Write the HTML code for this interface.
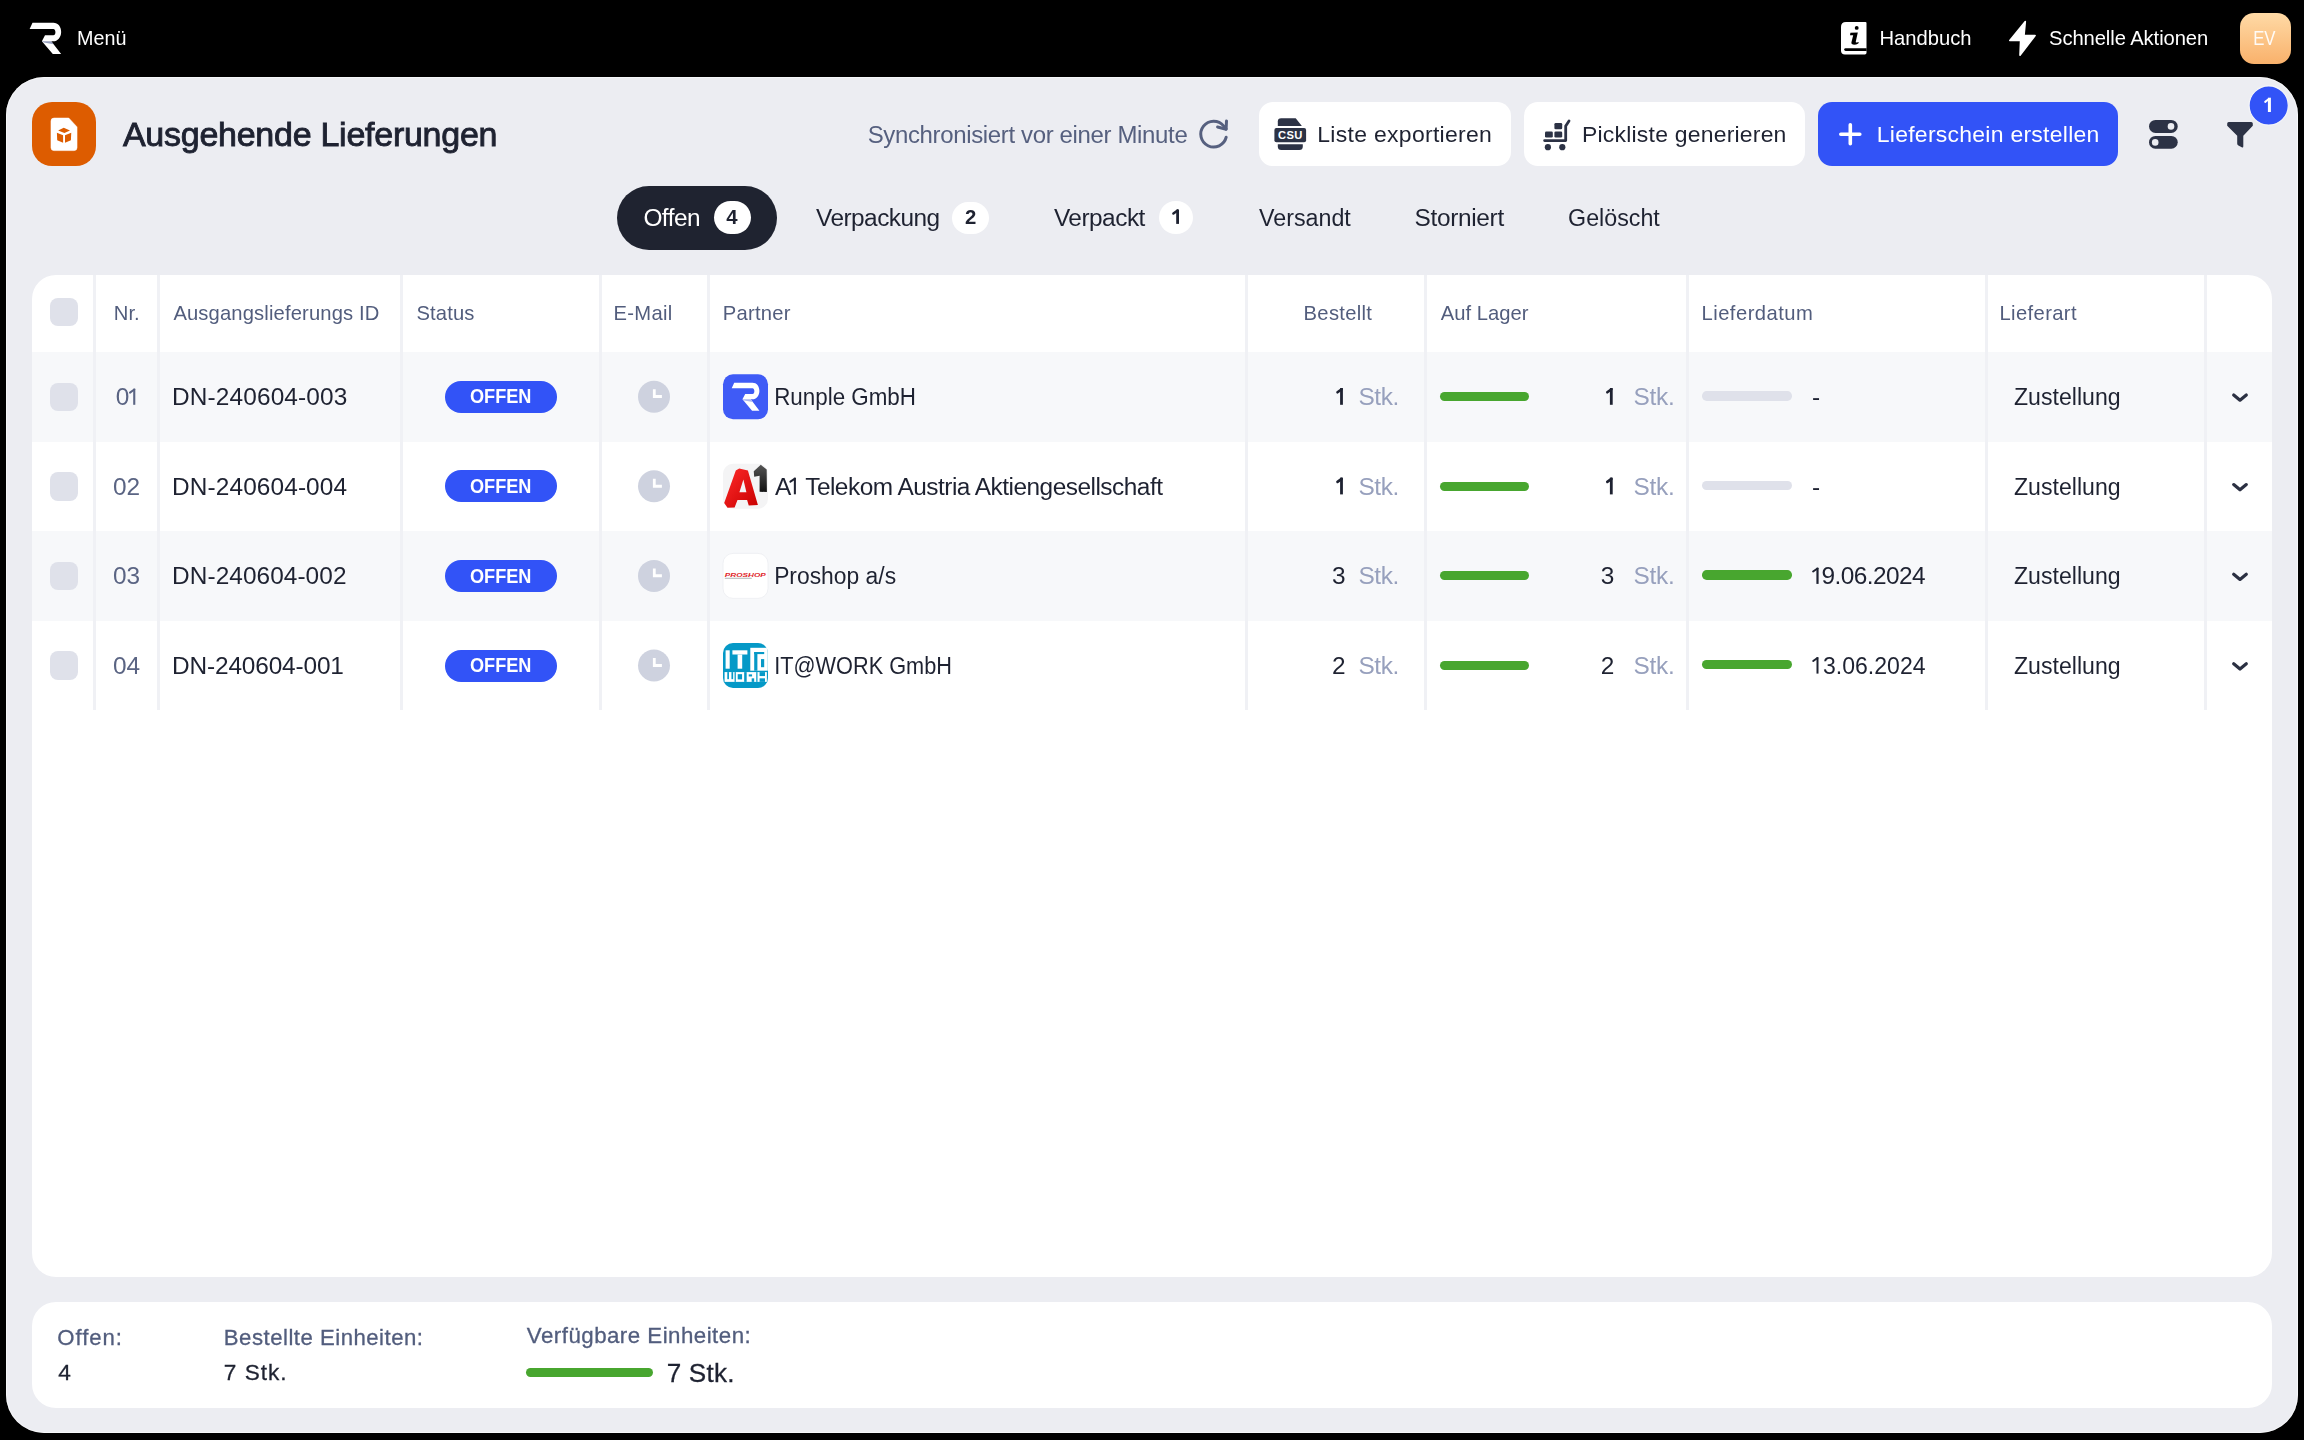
<!DOCTYPE html>
<html><head><meta charset="utf-8"><title>Ausgehende Lieferungen</title>
<style>
html,body{margin:0;padding:0;width:2304px;height:1440px;overflow:hidden;background:#000;}
body{position:relative;font-family:"Liberation Sans",sans-serif;}
.b{position:absolute;box-sizing:border-box;}
.t{position:absolute;line-height:1;white-space:nowrap;}
.tl{position:absolute;left:0;top:0;width:2304px;height:1440px;will-change:transform;}
svg{position:absolute;left:0;top:0;}
</style></head><body>
<div class="b" style="left:6px;top:77px;width:2291.5px;height:1356.3px;background:#ECEDF2;border-radius:38px;box-shadow:inset 0 0 0 1px rgba(255,255,255,0.55)"></div>
<div class="b" style="left:2240px;top:12.9px;width:51px;height:50.800000000000004px;background:linear-gradient(180deg,#FFDAA6,#F9B16B);border-radius:14px;"></div>
<div class="b" style="left:32px;top:102px;width:64px;height:64px;background:#DD5C00;border-radius:20px;"></div>
<div class="b" style="left:1259px;top:102.2px;width:252px;height:64.10000000000001px;background:#FFFFFF;border-radius:14px;"></div>
<div class="b" style="left:1524px;top:102.2px;width:281.20000000000005px;height:64.10000000000001px;background:#FFFFFF;border-radius:14px;"></div>
<div class="b" style="left:1818.3px;top:102.2px;width:300.0000000000002px;height:63.999999999999986px;background:#3253F7;border-radius:14px;"></div>
<div class="b" style="left:617.4px;top:185.5px;width:159.39999999999998px;height:64.0px;background:#1F2330;border-radius:32px;"></div>
<div class="b" style="left:713.5px;top:201px;width:37.5px;height:33px;background:#FFFFFF;border-radius:16.5px;"></div>
<div class="b" style="left:951.8px;top:201.5px;width:37.40000000000009px;height:32.5px;background:#FFFFFF;border-radius:16.5px;"></div>
<div class="b" style="left:1159.4px;top:201px;width:33.899999999999864px;height:33px;background:#FFFFFF;border-radius:16.5px;"></div>
<div class="b" style="left:32px;top:275px;width:2240px;height:1002px;background:#FFFFFF;border-radius:24px;overflow:hidden"></div>
<div class="b" style="left:32px;top:352.0px;width:2240px;height:89.60000000000002px;background:#F7F8FA;border-radius:0px;"></div>
<div class="b" style="left:32px;top:531.2px;width:2240px;height:89.59999999999991px;background:#F7F8FA;border-radius:0px;"></div>
<div class="b" style="left:93px;top:275px;width:3px;height:435px;background:#F0F1F5;border-radius:0px;"></div>
<div class="b" style="left:157px;top:275px;width:3px;height:435px;background:#F0F1F5;border-radius:0px;"></div>
<div class="b" style="left:400px;top:275px;width:3px;height:435px;background:#F0F1F5;border-radius:0px;"></div>
<div class="b" style="left:599px;top:275px;width:3px;height:435px;background:#F0F1F5;border-radius:0px;"></div>
<div class="b" style="left:707px;top:275px;width:3px;height:435px;background:#F0F1F5;border-radius:0px;"></div>
<div class="b" style="left:1245px;top:275px;width:3px;height:435px;background:#F0F1F5;border-radius:0px;"></div>
<div class="b" style="left:1424px;top:275px;width:3px;height:435px;background:#F0F1F5;border-radius:0px;"></div>
<div class="b" style="left:1686px;top:275px;width:3px;height:435px;background:#F0F1F5;border-radius:0px;"></div>
<div class="b" style="left:1985px;top:275px;width:3px;height:435px;background:#F0F1F5;border-radius:0px;"></div>
<div class="b" style="left:2204px;top:275px;width:3px;height:435px;background:#F0F1F5;border-radius:0px;"></div>
<div class="b" style="left:32px;top:1302px;width:2240px;height:106px;background:#FFFFFF;border-radius:24px;"></div>
<div class="b" style="left:50px;top:297.6px;width:28px;height:28.399999999999977px;background:#DFE1EA;border-radius:8px;"></div>
<div class="b" style="left:50px;top:382.6px;width:28px;height:28.5px;background:#DFE1EA;border-radius:8px;"></div>
<div class="b" style="left:444.7px;top:380.7px;width:112.30000000000001px;height:32.19999999999999px;background:#3253F7;border-radius:16.1px;"></div>
<div class="b" style="left:1440.3px;top:391.9px;width:89.10000000000014px;height:9.399999999999977px;background:#48A62F;border-radius:4.7px;"></div>
<div class="b" style="left:1702.2px;top:391.2px;width:89.79999999999995px;height:9.399999999999977px;background:#DFE1EA;border-radius:4.7px;"></div>
<div class="b" style="left:50px;top:472.20000000000005px;width:28px;height:28.5px;background:#DFE1EA;border-radius:8px;"></div>
<div class="b" style="left:444.7px;top:470.29999999999995px;width:112.30000000000001px;height:32.19999999999999px;background:#3253F7;border-radius:16.1px;"></div>
<div class="b" style="left:1440.3px;top:481.5px;width:89.10000000000014px;height:9.399999999999977px;background:#48A62F;border-radius:4.7px;"></div>
<div class="b" style="left:1702.2px;top:480.8px;width:89.79999999999995px;height:9.399999999999977px;background:#DFE1EA;border-radius:4.7px;"></div>
<div class="b" style="left:50px;top:561.8px;width:28px;height:28.5px;background:#DFE1EA;border-radius:8px;"></div>
<div class="b" style="left:444.7px;top:559.9px;width:112.30000000000001px;height:32.200000000000045px;background:#3253F7;border-radius:16.1px;"></div>
<div class="b" style="left:1440.3px;top:571.0999999999999px;width:89.10000000000014px;height:9.399999999999977px;background:#48A62F;border-radius:4.7px;"></div>
<div class="b" style="left:1702.2px;top:570.3999999999999px;width:89.79999999999995px;height:9.399999999999977px;background:#48A62F;border-radius:4.7px;"></div>
<div class="b" style="left:50px;top:651.4px;width:28px;height:28.5px;background:#DFE1EA;border-radius:8px;"></div>
<div class="b" style="left:444.7px;top:649.5px;width:112.30000000000001px;height:32.200000000000045px;background:#3253F7;border-radius:16.1px;"></div>
<div class="b" style="left:1440.3px;top:660.6999999999999px;width:89.10000000000014px;height:9.399999999999977px;background:#48A62F;border-radius:4.7px;"></div>
<div class="b" style="left:1702.2px;top:659.9999999999999px;width:89.79999999999995px;height:9.399999999999977px;background:#48A62F;border-radius:4.7px;"></div>
<div class="b" style="left:525.8px;top:1368.1px;width:127.60000000000002px;height:9.300000000000182px;background:#48A62F;border-radius:4.7px;"></div>
<svg width="2304" height="1440" viewBox="0 0 2304 1440">
<path d="M29.64,29.01 L32.5,22.76 L53.33,22.76 C58.02,22.76 61.15,26.67 61.15,31.88 C61.15,37.08 57.5,41.25 53.33,41.25 L51.25,41.25 L61.15,54.01 L52.81,54.01 L41.88,41.25 L45,35.26 L53.33,35.26 C54.64,35.26 55.42,33.7 55.42,32.14 C55.42,30.57 54.64,29.01 53.33,29.01 Z" fill="#fff"/>
<path d="M41.88,41.25 L51.25,41.25 L53.6,44.3 L44,42.6 Z" fill="#8a93b5" opacity="0.9"/>
<path d="M1846,22 L1865.5,22 Q1866.5,22 1866.5,23 L1866.5,52.7 Q1866.5,54.4 1864.8,54.4 L1845,54.4 Q1841,54.4 1841,50.4 L1841,27 Q1841,22 1846,22 Z" fill="#fff"/>
<path d="M1845.6,48.2 L1866.6,48.2 L1866.6,51 L1845.6,51 Q1844.2,51 1844.2,49.6 Q1844.2,48.2 1845.6,48.2 Z" fill="#000"/>
<circle cx="1856.7" cy="27.9" r="1.95" fill="#000"/>
<path d="M1850.4,32.7 L1857.8,32.5 L1855.8,41.5 Q1855.5,42.8 1856.8,42.5 L1858.8,42.0 L1858.3,43.4 Q1855.9,44.8 1853.3,44.6 Q1850.9,44.3 1851.5,42.0 L1853.2,35.3 L1850.0,35.2 Z" fill="#000"/>
<path d="M2025.3,21.6 L2009.8,40.5 L2020.6,40.5 L2020.0,55.2 L2035.1,35.6 L2024.0,35.6 Z" fill="#fff" stroke="#fff" stroke-width="1.6" stroke-linejoin="round"/>
<path d="M54,118.1 L68.75,118.1 L77,126.9 L77,147.6 Q77,150.6 74,150.6 L54,150.6 Q51,150.6 51,147.6 L51,121.1 Q51,118.1 54,118.1 Z" fill="#fff" stroke="#fff" stroke-width="0.6" stroke-linejoin="round"/>
<path d="M58.1,130.6 L63.75,127.8 L70,130.6 L64.4,133.1 Z M56.9,132.8 L63.1,135.3 L63.1,142.8 L57.2,140.3 Z M65,135.3 L71.25,132.8 L70.9,140.3 L65,142.8 Z" fill="#DD5C00"/>
<path d="M1226.2,137.2 A12.9,12.9 0 1 1 1223.6,125.9 L1226.1,129" fill="none" stroke="#56607F" stroke-width="3" stroke-linecap="round" stroke-linejoin="round"/>
<polyline points="1226.5,121 1226.1,129.3 1217.6,127" fill="none" stroke="#56607F" stroke-width="3" stroke-linecap="round" stroke-linejoin="round"/>
<path d="M1277.8,126.1 L1277.8,121.6 Q1277.8,118.3 1281.1,118.3 L1295.7,118.3 L1301.9,126.1 Z" fill="#2C3245"/>
<rect x="1274.4" y="128" width="31.7" height="14.2" rx="2" fill="#2C3245"/>
<path d="M1277.8,144.2 L1302.8,144.2 L1302.8,146.5 Q1302.8,150 1299.3,150 L1281.3,150 Q1277.8,150 1277.8,146.5 Z" fill="#2C3245"/>
<text x="1290.4" y="139" font-family="Liberation Sans" font-weight="700" font-size="11.2" fill="#fff" text-anchor="middle" letter-spacing="0.4">CSU</text>
<g fill="#2C3245"><rect x="1554.4" y="123" width="7.8" height="6.2" rx="1.3"/><rect x="1554.4" y="131.4" width="7.8" height="6.1" rx="1.3"/><rect x="1545" y="131.4" width="7.8" height="6.1" rx="1.3"/><circle cx="1547.9" cy="147.2" r="3.1"/><circle cx="1562.3" cy="147.2" r="3.1"/></g>
<polyline points="1544.6,140.6 1565.7,140.6 1565.7,126 1569,121" fill="none" stroke="#2C3245" stroke-width="2.8" stroke-linecap="round" stroke-linejoin="round"/>
<path d="M1850.3,124.8 L1850.3,143.7 M1840.8,134.25 L1859.8,134.25" stroke="#fff" stroke-width="3.6" stroke-linecap="round"/>
<rect x="2149" y="119.9" width="28.7" height="13" rx="6.5" fill="#2C3245"/><rect x="2149" y="136" width="28.7" height="12.7" rx="6.35" fill="#2C3245"/>
<circle cx="2171" cy="126.4" r="3.3" fill="#ECEDF2"/><circle cx="2155.2" cy="142.4" r="3.3" fill="#ECEDF2"/>
<path d="M2228.7,122 L2251.2,122 Q2252.8,122 2252.8,123.6 L2252.8,125.8 L2243.3,135.7 L2243.3,146.2 Q2243.3,147.9 2241.7,147.2 L2238.4,145.5 Q2237.2,144.9 2237.2,143.6 L2237.2,135.7 L2227.2,125.8 L2227.2,123.6 Q2227.2,122 2228.7,122 Z" fill="#2C3245"/>
<circle cx="2268.7" cy="105.5" r="19.6" fill="#3253F7" stroke="#F4F5F9" stroke-width="1.2"/>
<circle cx="654" cy="396.7" r="16" fill="#CED2DF"/>
<path d="M652.9,389.2 h2.8 v5.9 h6.2 v3 h-9 Z" fill="#fff"/>
<polyline points="2233.7,395.0 2240,400.2 2246.3,395.0" fill="none" stroke="#2B3042" stroke-width="3.2" stroke-linecap="round" stroke-linejoin="round"/>
<circle cx="654" cy="486.3" r="16" fill="#CED2DF"/>
<path d="M652.9,478.8 h2.8 v5.9 h6.2 v3 h-9 Z" fill="#fff"/>
<polyline points="2233.7,484.6 2240,489.8 2246.3,484.6" fill="none" stroke="#2B3042" stroke-width="3.2" stroke-linecap="round" stroke-linejoin="round"/>
<circle cx="654" cy="575.9" r="16" fill="#CED2DF"/>
<path d="M652.9,568.4 h2.8 v5.9 h6.2 v3 h-9 Z" fill="#fff"/>
<polyline points="2233.7,574.2 2240,579.4 2246.3,574.2" fill="none" stroke="#2B3042" stroke-width="3.2" stroke-linecap="round" stroke-linejoin="round"/>
<circle cx="654" cy="665.5" r="16" fill="#CED2DF"/>
<path d="M652.9,658.0 h2.8 v5.9 h6.2 v3 h-9 Z" fill="#fff"/>
<polyline points="2233.7,663.8 2240,669.0 2246.3,663.8" fill="none" stroke="#2B3042" stroke-width="3.2" stroke-linecap="round" stroke-linejoin="round"/>
<rect x="723" y="374.2" width="45" height="45" rx="10" fill="#3F5BF6" />
<g transform="translate(731.7,382.7) scale(0.8791,0.8992) translate(-29.64,-22.76)"><path d="M29.64,29.01 L32.5,22.76 L53.33,22.76 C58.02,22.76 61.15,26.67 61.15,31.88 C61.15,37.08 57.5,41.25 53.33,41.25 L51.25,41.25 L61.15,54.01 L52.81,54.01 L41.88,41.25 L45,35.26 L53.33,35.26 C54.64,35.26 55.42,33.7 55.42,32.14 C55.42,30.57 54.64,29.01 53.33,29.01 Z" fill="#fff"/><path d="M41.88,41.25 L51.25,41.25 L53.6,44.3 L44,42.6 Z" fill="#aab4f0"/></g>
<rect x="723" y="463.8" width="45" height="45" rx="10" fill="#F4F4F5" />
<defs><linearGradient id="ra" x1="0" y1="0" x2="1" y2="1"><stop offset="0" stop-color="#FF2A2A"/><stop offset="1" stop-color="#C80000"/></linearGradient><linearGradient id="ka" x1="0" y1="0" x2="0" y2="1"><stop offset="0" stop-color="#555"/><stop offset="1" stop-color="#111"/></linearGradient></defs>
<path d="M724.2,502.9 L727.5,507.7 L734.6,507.5 L737.5,500 L747.1,500 L748.75,505.6 L757.9,505 L747.9,470.4 L739.2,468.5 L735.8,470.4 Z M739.4,492.3 L743.4,479.4 L746.4,492.3 Z" fill="url(#ra)" fill-rule="evenodd"/>
<path d="M753.75,471.25 L760.8,464.8 L766.7,469.6 L766.9,492.1 L759.6,491.7 L759.6,475.8 L754.2,476.7 Z" fill="url(#ka)"/>
<rect x="723" y="553.4" width="45" height="45" rx="10" fill="#FFFFFF" stroke="#ECEDF1" stroke-width="0.8"/>
<text x="724.8" y="577" font-family="Liberation Sans" font-weight="700" font-style="italic" font-size="5.3" fill="#E0252A" textLength="41" lengthAdjust="spacingAndGlyphs">PROSHOP</text>
<rect x="724.8" y="577.7" width="27" height="1.3" fill="#9aa0a0" opacity="0.6"/>
<rect x="723" y="643.0" width="45" height="45" rx="10" fill="#0599C7" />
<g clip-path="url(#itc)"><rect x="725.60" y="650.30" width="4.10" height="18.40" fill="#fff"/><rect x="732.40" y="650.30" width="15.00" height="4.20" fill="#fff"/><rect x="737.60" y="654.50" width="4.60" height="14.20" fill="#fff"/><rect x="750.30" y="647.80" width="17.50" height="22.90" fill="#fff"/><rect x="754.20" y="652.00" width="10.00" height="2.10" fill="#0599C7"/><rect x="754.20" y="652.00" width="3.20" height="18.70" fill="#0599C7"/><rect x="761.00" y="659.10" width="3.20" height="8.10" fill="#0599C7"/><rect x="724.58" y="672.09" width="42.29" height="9.79" fill="#fff"/><rect x="727.29" y="672.09" width="1.67" height="7.08" fill="#0599C7"/><rect x="731.46" y="672.09" width="1.67" height="7.08" fill="#0599C7"/><rect x="734.58" y="672.09" width="1.25" height="9.79" fill="#0599C7"/><rect x="737.71" y="674.17" width="4.37" height="5.21" fill="#0599C7"/><rect x="744.17" y="672.09" width="2.50" height="9.79" fill="#0599C7"/><rect x="748.75" y="674.38" width="3.33" height="2.08" fill="#0599C7"/><rect x="751.67" y="678.34" width="2.50" height="3.54" fill="#0599C7"/><rect x="756.25" y="672.09" width="1.25" height="9.79" fill="#0599C7"/><rect x="759.58" y="672.09" width="5.42" height="3.96" fill="#0599C7"/><rect x="759.58" y="678.34" width="5.42" height="3.54" fill="#0599C7"/></g>
<clipPath id="itc"><rect x="723" y="642.8" width="45" height="45" rx="10"/></clipPath>
</svg>
<div class="tl">
<div class="t" style="left:77.00px;top:28.15px;font-size:20.49px;letter-spacing:0.000px;color:#FFFFFF;font-weight:400;transform:scaleX(0.9627);transform-origin:1.00px 0;">Menü</div>
<div class="t" style="left:1879.50px;top:28.19px;font-size:20.20px;letter-spacing:-0.003px;color:#FFFFFF;font-weight:400;">Handbuch</div>
<div class="t" style="left:2049.00px;top:28.09px;font-size:20.20px;letter-spacing:-0.080px;color:#FFFFFF;font-weight:400;">Schnelle Aktionen</div>
<div class="t" style="left:2253.00px;top:28.09px;font-size:20.20px;letter-spacing:0.000px;color:rgba(255,255,255,0.92);font-weight:400;transform:scaleX(0.8310);transform-origin:1.00px 0;">EV</div>
<div class="t" style="left:122.95px;top:116.55px;font-size:34.01px;letter-spacing:-0.261px;color:#1E2231;font-weight:400;-webkit-text-stroke:0.9px #1E2231;">Ausgehende Lieferungen</div>
<div class="t" style="left:867.70px;top:122.59px;font-size:23.98px;letter-spacing:-0.345px;color:#56607F;font-weight:400;">Synchronisiert vor einer Minute</div>
<div class="t" style="left:1317.30px;top:123.36px;font-size:22.97px;letter-spacing:0.298px;color:#1E2231;font-weight:400;">Liste exportieren</div>
<div class="t" style="left:1582.00px;top:123.36px;font-size:22.97px;letter-spacing:0.208px;color:#1E2231;font-weight:400;">Pickliste generieren</div>
<div class="t" style="left:1876.80px;top:123.36px;font-size:22.97px;letter-spacing:0.260px;color:#FFFFFF;font-weight:400;">Lieferschein erstellen</div>
<div class="t" style="left:643.40px;top:205.62px;font-size:24.42px;letter-spacing:-0.523px;color:#FFFFFF;font-weight:400;">Offen</div>
<div class="t" style="left:726.20px;top:207.12px;font-size:20.35px;letter-spacing:0.000px;color:#1E2231;font-weight:700;">4</div>
<div class="t" style="left:816.00px;top:205.52px;font-size:24.42px;letter-spacing:-0.528px;color:#1E2231;font-weight:400;">Verpackung</div>
<div class="t" style="left:965.00px;top:207.12px;font-size:20.35px;letter-spacing:0.000px;color:#1E2231;font-weight:700;">2</div>
<div class="t" style="left:1053.90px;top:205.52px;font-size:24.42px;letter-spacing:-0.498px;color:#1E2231;font-weight:400;">Verpackt</div>
<div class="t" style="left:1258.60px;top:205.52px;font-size:24.42px;letter-spacing:0.000px;color:#1E2231;font-weight:400;transform:scaleX(0.9527);transform-origin:0.00px 0;">Versandt</div>
<div class="t" style="left:1414.60px;top:205.52px;font-size:24.42px;letter-spacing:-0.334px;color:#1E2231;font-weight:400;">Storniert</div>
<div class="t" style="left:1568.00px;top:205.52px;font-size:24.42px;letter-spacing:0.000px;color:#1E2231;font-weight:400;transform:scaleX(0.9524);transform-origin:1.00px 0;">Gelöscht</div>
<div class="t" style="left:113.80px;top:303.39px;font-size:20.20px;letter-spacing:0.006px;color:#525D7D;font-weight:400;">Nr.</div>
<div class="t" style="left:173.40px;top:303.39px;font-size:20.20px;letter-spacing:0.143px;color:#525D7D;font-weight:400;">Ausgangslieferungs ID</div>
<div class="t" style="left:416.40px;top:303.39px;font-size:20.20px;letter-spacing:0.152px;color:#525D7D;font-weight:400;">Status</div>
<div class="t" style="left:613.50px;top:303.39px;font-size:20.20px;letter-spacing:0.296px;color:#525D7D;font-weight:400;">E-Mail</div>
<div class="t" style="left:722.80px;top:303.39px;font-size:20.20px;letter-spacing:0.253px;color:#525D7D;font-weight:400;">Partner</div>
<div class="t" style="left:1303.60px;top:303.39px;font-size:20.20px;letter-spacing:0.301px;color:#525D7D;font-weight:400;">Bestellt</div>
<div class="t" style="left:1440.80px;top:303.39px;font-size:20.20px;letter-spacing:0.022px;color:#525D7D;font-weight:400;">Auf Lager</div>
<div class="t" style="left:1701.50px;top:303.39px;font-size:20.20px;letter-spacing:0.471px;color:#525D7D;font-weight:400;">Lieferdatum</div>
<div class="t" style="left:1999.40px;top:303.39px;font-size:20.20px;letter-spacing:0.393px;color:#525D7D;font-weight:400;">Lieferart</div>
<div class="t" style="left:115.70px;top:384.92px;font-size:24.42px;letter-spacing:0.000px;color:#5A6483;font-weight:400;">0</div>
<div class="t" style="left:172.10px;top:384.92px;font-size:24.42px;letter-spacing:0.125px;color:#1E2231;font-weight:400;">DN-240604-003</div>
<div class="t" style="left:470.40px;top:386.30px;font-size:20.78px;letter-spacing:0.000px;color:#FFFFFF;font-weight:700;transform:scaleX(0.8735);transform-origin:0.00px 0;">OFFEN</div>
<div class="t" style="left:774.10px;top:384.92px;font-size:24.42px;letter-spacing:0.000px;color:#1E2231;font-weight:400;transform:scaleX(0.9171);transform-origin:2.00px 0;">Runple GmbH</div>
<div class="t" style="left:1358.50px;top:384.92px;font-size:24.42px;letter-spacing:-0.455px;color:#97A0BD;font-weight:400;">Stk.</div>
<div class="t" style="left:1633.60px;top:384.92px;font-size:24.42px;letter-spacing:-0.322px;color:#97A0BD;font-weight:400;">Stk.</div>
<div class="t" style="left:1812.00px;top:384.92px;font-size:24.42px;letter-spacing:0.000px;color:#1E2231;font-weight:400;">-</div>
<div class="t" style="left:2013.90px;top:384.92px;font-size:24.42px;letter-spacing:0.000px;color:#1E2231;font-weight:400;transform:scaleX(0.9465);transform-origin:0.00px 0;">Zustellung</div>
<div class="t" style="left:112.91px;top:474.52px;font-size:24.42px;letter-spacing:0.000px;color:#5A6483;font-weight:400;">02</div>
<div class="t" style="left:172.10px;top:474.52px;font-size:24.42px;letter-spacing:0.108px;color:#1E2231;font-weight:400;">DN-240604-004</div>
<div class="t" style="left:470.40px;top:475.90px;font-size:20.78px;letter-spacing:0.000px;color:#FFFFFF;font-weight:700;transform:scaleX(0.8735);transform-origin:0.00px 0;">OFFEN</div>
<div class="t" style="left:775.00px;top:474.52px;font-size:24.42px;letter-spacing:0.000px;color:#1E2231;font-weight:400;">A</div>
<div class="t" style="left:805.20px;top:474.52px;font-size:24.42px;letter-spacing:-0.505px;color:#1E2231;font-weight:400;">Telekom Austria Aktiengesellschaft</div>
<div class="t" style="left:1358.50px;top:474.52px;font-size:24.42px;letter-spacing:-0.455px;color:#97A0BD;font-weight:400;">Stk.</div>
<div class="t" style="left:1633.60px;top:474.52px;font-size:24.42px;letter-spacing:-0.322px;color:#97A0BD;font-weight:400;">Stk.</div>
<div class="t" style="left:1812.00px;top:474.52px;font-size:24.42px;letter-spacing:0.000px;color:#1E2231;font-weight:400;">-</div>
<div class="t" style="left:2013.90px;top:474.52px;font-size:24.42px;letter-spacing:0.000px;color:#1E2231;font-weight:400;transform:scaleX(0.9465);transform-origin:0.00px 0;">Zustellung</div>
<div class="t" style="left:112.91px;top:564.12px;font-size:24.42px;letter-spacing:0.000px;color:#5A6483;font-weight:400;">03</div>
<div class="t" style="left:172.10px;top:564.12px;font-size:24.42px;letter-spacing:0.058px;color:#1E2231;font-weight:400;">DN-240604-002</div>
<div class="t" style="left:470.40px;top:565.50px;font-size:20.78px;letter-spacing:0.000px;color:#FFFFFF;font-weight:700;transform:scaleX(0.8735);transform-origin:0.00px 0;">OFFEN</div>
<div class="t" style="left:774.10px;top:564.12px;font-size:24.42px;letter-spacing:0.000px;color:#1E2231;font-weight:400;transform:scaleX(0.9364);transform-origin:2.00px 0;">Proshop a/s</div>
<div class="t" style="left:1332.00px;top:564.12px;font-size:24.42px;letter-spacing:0.000px;color:#1E2231;font-weight:400;">3</div>
<div class="t" style="left:1358.50px;top:564.12px;font-size:24.42px;letter-spacing:-0.455px;color:#97A0BD;font-weight:400;">Stk.</div>
<div class="t" style="left:1600.80px;top:564.12px;font-size:24.42px;letter-spacing:0.000px;color:#1E2231;font-weight:400;">3</div>
<div class="t" style="left:1633.60px;top:564.12px;font-size:24.42px;letter-spacing:-0.322px;color:#97A0BD;font-weight:400;">Stk.</div>
<div class="t" style="left:1821.50px;top:564.12px;font-size:24.42px;letter-spacing:-0.563px;color:#1E2231;font-weight:400;">9.06.2024</div>
<div class="t" style="left:2013.90px;top:564.12px;font-size:24.42px;letter-spacing:0.000px;color:#1E2231;font-weight:400;transform:scaleX(0.9465);transform-origin:0.00px 0;">Zustellung</div>
<div class="t" style="left:112.91px;top:653.72px;font-size:24.42px;letter-spacing:0.000px;color:#5A6483;font-weight:400;">04</div>
<div class="t" style="left:172.10px;top:653.72px;font-size:24.42px;letter-spacing:-0.158px;color:#1E2231;font-weight:400;">DN-240604-001</div>
<div class="t" style="left:470.40px;top:655.10px;font-size:20.78px;letter-spacing:0.000px;color:#FFFFFF;font-weight:700;transform:scaleX(0.8735);transform-origin:0.00px 0;">OFFEN</div>
<div class="t" style="left:774.10px;top:653.72px;font-size:24.42px;letter-spacing:0.000px;color:#1E2231;font-weight:400;transform:scaleX(0.8900);transform-origin:2.00px 0;">IT@WORK GmbH</div>
<div class="t" style="left:1332.00px;top:653.72px;font-size:24.42px;letter-spacing:0.000px;color:#1E2231;font-weight:400;">2</div>
<div class="t" style="left:1358.50px;top:653.72px;font-size:24.42px;letter-spacing:-0.455px;color:#97A0BD;font-weight:400;">Stk.</div>
<div class="t" style="left:1600.80px;top:653.72px;font-size:24.42px;letter-spacing:0.000px;color:#1E2231;font-weight:400;">2</div>
<div class="t" style="left:1633.60px;top:653.72px;font-size:24.42px;letter-spacing:-0.322px;color:#97A0BD;font-weight:400;">Stk.</div>
<div class="t" style="left:1823.00px;top:653.72px;font-size:24.42px;letter-spacing:0.000px;color:#1E2231;font-weight:400;transform:scaleX(0.9444);transform-origin:0.00px 0;">3.06.2024</div>
<div class="t" style="left:2013.90px;top:653.72px;font-size:24.42px;letter-spacing:0.000px;color:#1E2231;font-weight:400;transform:scaleX(0.9465);transform-origin:0.00px 0;">Zustellung</div>
<div class="t" style="left:57.35px;top:1327.08px;font-size:22.17px;letter-spacing:0.901px;color:#525D7D;font-weight:400;-webkit-text-stroke:0.3px #525D7D;">Offen:</div>
<div class="t" style="left:58.35px;top:1362.01px;font-size:22.60px;letter-spacing:0.000px;color:#1E2231;font-weight:400;-webkit-text-stroke:0.3px #1E2231;">4</div>
<div class="t" style="left:223.85px;top:1327.08px;font-size:22.17px;letter-spacing:0.498px;color:#525D7D;font-weight:400;-webkit-text-stroke:0.3px #525D7D;">Bestellte Einheiten:</div>
<div class="t" style="left:223.85px;top:1362.01px;font-size:22.60px;letter-spacing:1.002px;color:#1E2231;font-weight:400;-webkit-text-stroke:0.3px #1E2231;">7 Stk.</div>
<div class="t" style="left:526.85px;top:1324.96px;font-size:22.31px;letter-spacing:0.471px;color:#525D7D;font-weight:400;-webkit-text-stroke:0.3px #525D7D;">Verfügbare Einheiten:</div>
<div class="t" style="left:666.65px;top:1360.46px;font-size:26.09px;letter-spacing:0.212px;color:#1E2231;font-weight:400;-webkit-text-stroke:0.3px #1E2231;">7 Stk.</div>
</div>
<svg width="2304" height="1440" viewBox="0 0 2304 1440" style="pointer-events:none">
<rect x="1176.20" y="209.70" width="2.80" height="14.20" fill="#1E2231"/><path d="M1173.40,213.40 L1177.60,210.40" stroke="#1E2231" stroke-width="2.5" stroke-linecap="round"/><rect x="2267.90" y="97.70" width="3.00" height="14.30" fill="#fff"/><path d="M2265.20,101.90 L2268.90,99.00" stroke="#fff" stroke-width="2.0" stroke-linecap="round"/><rect x="1340.10" y="388.00" width="2.80" height="16.80" fill="#1E2231"/><path d="M1337.50,392.30 L1341.60,389.30" stroke="#1E2231" stroke-width="2.6" stroke-linecap="round"/><rect x="1609.90" y="388.00" width="2.80" height="16.80" fill="#1E2231"/><path d="M1607.30,392.30 L1611.40,389.30" stroke="#1E2231" stroke-width="2.6" stroke-linecap="round"/><rect x="1340.10" y="477.60" width="2.80" height="16.80" fill="#1E2231"/><path d="M1337.50,481.90 L1341.60,478.90" stroke="#1E2231" stroke-width="2.6" stroke-linecap="round"/><rect x="1609.90" y="477.60" width="2.80" height="16.80" fill="#1E2231"/><path d="M1607.30,481.90 L1611.40,478.90" stroke="#1E2231" stroke-width="2.6" stroke-linecap="round"/><rect x="133.20" y="388.70" width="2.10" height="16.10" fill="#5A6483"/><path d="M130.00,392.60 L134.30,389.50" stroke="#5A6483" stroke-width="2.0" stroke-linecap="round"/><rect x="793.85" y="477.80" width="2.05" height="16.50" fill="#1E2231"/><path d="M790.40,481.60 L794.90,478.60" stroke="#1E2231" stroke-width="2.0" stroke-linecap="round"/><rect x="1816.40" y="567.80" width="2.20" height="16.10" fill="#1E2231"/><path d="M1813.10,571.50 L1817.50,568.50" stroke="#1E2231" stroke-width="2.0" stroke-linecap="round"/><rect x="1816.50" y="657.30" width="2.00" height="16.30" fill="#1E2231"/><path d="M1813.20,661.00 L1817.40,658.00" stroke="#1E2231" stroke-width="2.0" stroke-linecap="round"/>
</svg>
</body></html>
